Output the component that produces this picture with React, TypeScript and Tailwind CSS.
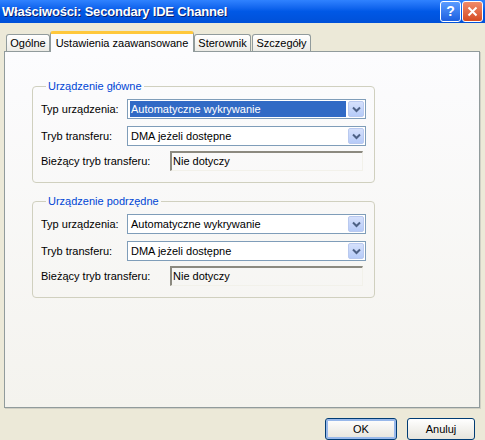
import React from 'react';

const font = { fontFamily: '"Liberation Sans", Arial, sans-serif' };

function Chevron() {
  return (
    <svg width="9" height="7" viewBox="0 0 9 7">
      <path d="M1 1.5 L4.5 5 L8 1.5" fill="none" stroke="#4d6185" strokeWidth="2" />
    </svg>
  );
}

function Combo({ value, selected }: { value: string; selected?: boolean }) {
  return (
    <div className="flex h-[20px] w-[239px] items-center border border-[#7f9db9] bg-white pl-[2px] pr-[1px]">
      <div
        className={`flex h-[16px] flex-1 items-center pl-[1px] text-[11px] ${
          selected ? 'bg-[#316ac5] text-white' : 'text-black'
        }`}
      >
        {value}
      </div>
      <div className="ml-[2px] flex h-[16px] w-[16px] items-center justify-center rounded-[2px] border border-[#b9c9ef] bg-gradient-to-b from-[#d5e0fb] to-[#b6cbf8]">
        <Chevron />
      </div>
    </div>
  );
}

function Group({ title }: { title: string }) {
  return (
    <fieldset className="ml-[27px] w-[343px] rounded-[4px] border border-[#d0d0bf] px-[8px] pb-[11px] pt-[6px]">
      <legend className="ml-[5px] px-[2px] text-[11px] leading-[14px] text-[#0046d5]">{title}</legend>
      <div className="flex flex-col">
        <div className="flex items-center">
          <span className="w-[86px] text-[11px] text-black">Typ urządzenia:</span>
          <Combo value="Automatyczne wykrywanie" selected={title === 'Urządzenie główne'} />
        </div>
        <div className="mt-[7px] flex items-center">
          <span className="w-[86px] text-[11px] text-black">Tryb transferu:</span>
          <Combo value="DMA jeżeli dostępne" />
        </div>
        <div className="mt-[5px] flex items-center">
          <span className="w-[129px] text-[11px] text-black">Bieżący tryb transferu:</span>
          <div className="flex h-[20px] w-[193px] items-center border-b border-l-2 border-r border-t-2 border-b-[#f2f1ea] border-l-[#8c8a80] border-r-[#f2f1ea] border-t-[#8c8a80] pl-[1px] text-[11px] text-black">
            Nie dotyczy
          </div>
        </div>
      </div>
    </fieldset>
  );
}

function Tab({ label, active, w }: { label: string; active?: boolean; w: string }) {
  if (active) {
    return (
      <div
        className={`${w} relative z-10 -mb-px flex h-[21px] items-center justify-center rounded-t-[3px] border-x border-t-[3px] border-x-[#919b9c] border-t-[#ffc83c] bg-[#fcfcfe] text-[11px] text-black`}
      >
        {label}
      </div>
    );
  }
  return (
    <div
      className={`${w} flex h-[17px] items-center justify-center rounded-t-[3px] border-x border-t border-[#919b9c] bg-gradient-to-b from-white to-[#ecebe6] text-[11px] text-black`}
    >
      {label}
    </div>
  );
}

export default function App() {
  return (
    <div className="flex h-[440px] w-[485px] flex-col overflow-hidden bg-[#ece9d8]" style={font}>
      {/* Title bar */}
      <div className="flex h-[23px] items-center bg-gradient-to-b from-[#2f82ff] via-[#0058e6] to-[#0050d8] pl-[2px] pr-[2px]">
        <span className="flex-1 text-[13px] font-bold tracking-[-0.2px] text-white [text-shadow:1px_1px_0_#0a1f6e]">
          Właściwości: Secondary IDE Channel
        </span>
        <div className="flex h-[21px] w-[21px] items-center justify-center rounded-[3px] border border-white bg-gradient-to-b from-[#5a9bff] to-[#1c5fe0] text-[14px] font-bold text-white">
          ?
        </div>
        <div className="ml-[1px] flex h-[21px] w-[21px] items-center justify-center rounded-[3px] border border-white bg-gradient-to-b from-[#f08a6a] to-[#d54a20]">
          <svg width="11" height="11" viewBox="0 0 11 11">
            <path d="M1.5 1.5 L9.5 9.5 M9.5 1.5 L1.5 9.5" stroke="white" strokeWidth="2" />
          </svg>
        </div>
      </div>

      {/* Tabs */}
      <div className="mt-[8px] flex items-end pl-[6px]">
        <Tab label="Ogólne" w="w-[44px]" />
        <Tab label="Ustawienia zaawansowane" active w="w-[144px]" />
        <Tab label="Sterownik" w="w-[57px]" />
        <div className="w-[1px]" />
        <Tab label="Szczegóły" w="w-[59px]" />
      </div>

      {/* Tab panel */}
      <div className="ml-[4px] flex h-[357px] w-[476px] flex-col border border-[#919b9c] bg-gradient-to-b from-[#fcfcfe] to-[#f4f3ee] pt-[27px] shadow-[1px_1px_0_#d0cfc4]">
        <Group title="Urządzenie główne" />
        <div className="h-[11px]" />
        <Group title="Urządzenie podrzędne" />
      </div>

      {/* Buttons */}
      <div className="mt-[10px] flex justify-end gap-[10px] pr-[10px]">
        <button className="h-[22px] w-[72px] rounded-[3px] border border-[#003c74] bg-gradient-to-b from-white to-[#e6e4dc] text-[11px] text-black shadow-[inset_0_0_0_2px_#98b8ea]">
          OK
        </button>
        <button className="h-[22px] w-[68px] rounded-[3px] border border-[#003c74] bg-gradient-to-b from-white to-[#e6e4dc] text-[11px] text-black">
          Anuluj
        </button>
      </div>
    </div>
  );
}
